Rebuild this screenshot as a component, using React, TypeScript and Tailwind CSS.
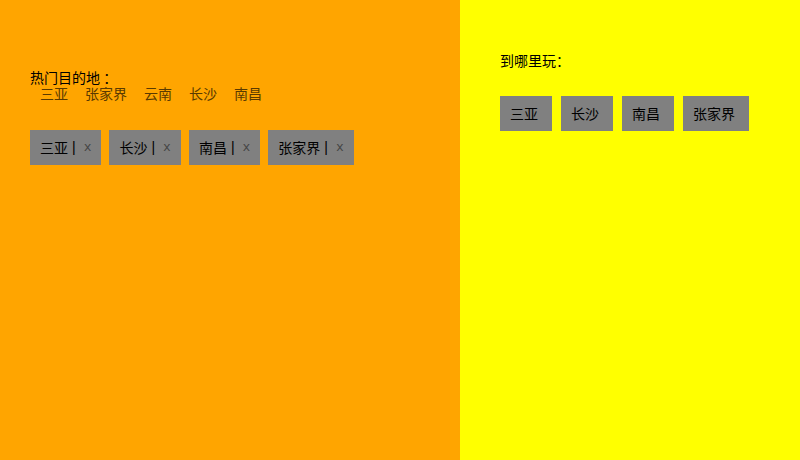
import React from 'react';

const hotCities = ['三亚', '张家界', '云南', '长沙', '南昌'];
const picked = ['三亚', '长沙', '南昌', '张家界'];

export default function App() {
  return (
    <div
      className="flex w-[800px] h-[460px] text-[14px] text-black"
      style={{ fontFamily: '"Noto Sans CJK SC", "Liberation Sans", sans-serif' }}
    >
      {/* left: hot destinations */}
      <div className="w-[460px] h-full bg-[#ffa500] pl-[30px] pt-[70px]">
        <div className="leading-[15px]">热门目的地 ：</div>
        <div className="flex gap-[17px] pl-[10px] leading-[16px] text-[#5a3a00]">
          {hotCities.map((c) => (
            <span key={c}>{c}</span>
          ))}
        </div>
        <div className="flex gap-[8px] mt-[29px]">
          {picked.map((c) => (
            <div key={c} className="h-[35px] flex items-center bg-[#808080] pl-[10px] pr-[10px]">
              <span>{c}</span>
              <span className="ml-[4px] text-black" style={{ fontFamily: '"Liberation Sans", sans-serif' }}>
                |
              </span>
              <span
                className="ml-[8px] text-[13px] text-[#444]"
                style={{ fontFamily: '"Liberation Mono", monospace' }}
              >
                x
              </span>
            </div>
          ))}
        </div>
      </div>

      {/* right: where to go */}
      <div className="flex-1 h-full bg-[#ffff00] pl-[40px] pt-[52px]">
        <div className="leading-[16px]">到哪里玩：</div>
        <div className="flex gap-[9px] mt-[28px]">
          {picked.map((c) => (
            <div key={c} className="h-[35px] flex items-center bg-[#808080] pl-[10px] pr-[14px]">
              {c}
            </div>
          ))}
        </div>
      </div>
    </div>
  );
}
